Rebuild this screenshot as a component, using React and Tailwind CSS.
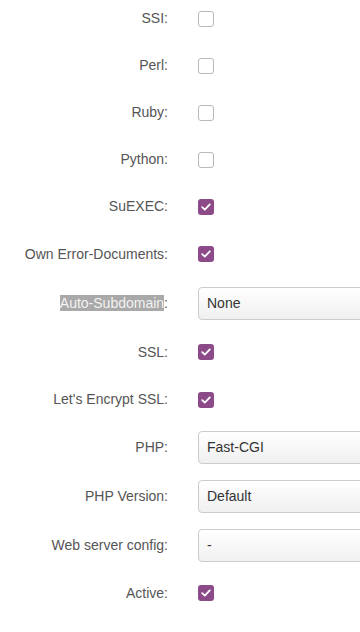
import React from "react";

const rows = [
    { label: "SSI:", type: "check", checked: false, h: "h-[47px]" },
    { label: "Perl:", type: "check", checked: false, h: "h-[47px]" },
    { label: "Ruby:", type: "check", checked: false, h: "h-[47px]" },
    { label: "Python:", type: "check", checked: false, h: "h-[47px]" },
    { label: "SuEXEC:", type: "check", checked: true, h: "h-[47px]" },
    { label: "Own Error-Documents:", type: "check", checked: true, h: "h-[48px]" },
    { label: "Auto-Subdomain", type: "select", value: "None", h: "h-[50px]", selected: true },
    { label: "SSL:", type: "check", checked: true, h: "h-[48px]" },
    { label: "Let's Encrypt SSL:", type: "check", checked: true, h: "h-[47px]" },
    { label: "PHP:", type: "select", value: "Fast-CGI", h: "h-[49px]" },
    { label: "PHP Version:", type: "select", value: "Default", h: "h-[49px]" },
    { label: "Web server config:", type: "select", value: "-", h: "h-[49px]" },
    { label: "Active:", type: "check", checked: true, h: "h-[46px]" },
];

const Checkbox = ({ checked }) =>
    checked ? (
        <div className="w-[16px] h-[16px] rounded-[3px] bg-[#8c4a89] flex items-center justify-center">
            <svg width="10" height="8" viewBox="0 0 10 8" fill="none">
                <path d="M1.2 4.2 L3.8 6.6 L8.8 1.4" stroke="white" strokeWidth="1.8" strokeLinecap="round" strokeLinejoin="round" />
            </svg>
        </div>
    ) : (
        <div className="w-[16px] h-[16px] rounded-[3px] border border-[#b8b8b8] bg-white"></div>
    );

const App = () => {
    return (
        <div className="w-[360px] h-[632px] overflow-hidden bg-white font-['Liberation_Sans',Arial,sans-serif] text-[14px]">
            <div className="-mt-[5px]">
                {rows.map((row) => (
                    <div key={row.label} className={`${row.h} flex items-center`}>
                        <div className="w-[168px] shrink-0 text-right text-[#555]">
                            {row.selected ? (
                                <>
                                    <span className="bg-[#a9a9a9] text-[#f2f2f2]">{row.label}</span>:
                                </>
                            ) : (
                                row.label
                            )}
                        </div>
                        <div className="ml-[30px] shrink-0">
                            {row.type === "check" ? (
                                <Checkbox checked={row.checked} />
                            ) : (
                                <div className="w-[200px] h-[33px] border border-[#cccccc] rounded-[4px] bg-gradient-to-b from-white to-[#f0f0f0] flex items-center pl-[8px] text-[#333]">
                                    {row.value}
                                </div>
                            )}
                        </div>
                    </div>
                ))}
            </div>
        </div>
    );
};

export default App;
